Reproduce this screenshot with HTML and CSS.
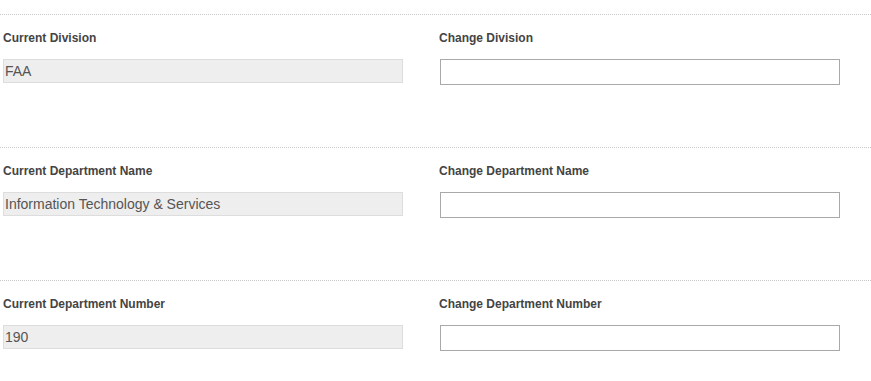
FILE: index.html
```html
<!DOCTYPE html>
<html lang="en">
<head>
    <meta charset="UTF-8">
    <meta name="viewport" content="width=device-width, initial-scale=1.0">
    <title>Change Department</title>
    <link rel="stylesheet" href="styles.css">
</head>
<body>
    <div class="form">
        <!-- Division -->
        <div class="section">
            <div class="field">
                <label>Current Division</label>
                <div class="readonly">FAA</div>
            </div>
            <div class="field">
                <label for="division">Change Division</label>
                <input type="text" id="division">
            </div>
        </div>
        <!-- Department name -->
        <div class="section">
            <div class="field">
                <label>Current Department Name</label>
                <div class="readonly">Information Technology &amp; Services</div>
            </div>
            <div class="field">
                <label for="deptName">Change Department Name</label>
                <input type="text" id="deptName">
            </div>
        </div>
        <!-- Department number -->
        <div class="section">
            <div class="field">
                <label>Current Department Number</label>
                <div class="readonly">190</div>
            </div>
            <div class="field">
                <label for="deptNumber">Change Department Number</label>
                <input type="text" id="deptNumber">
            </div>
        </div>
    </div>
</body>
</html>
```

FILE: styles.css
```css
/* General */
body {
    font-family: "Liberation Sans", Arial, sans-serif;
    margin: 0;
    padding: 14px 0 0 0;
    background: #fff;
    color: #444;
}

/* Sections */
.section {
    border-top: 1px dotted #c8c8c8;
    padding: 16px 0 62px 3px;
    display: flex;
    gap: 36px;
}

.section:last-child {
    padding-bottom: 20px;
}

.field {
    width: 400px;
}

.field label {
    display: block;
    font-size: 12px;
    font-weight: bold;
    line-height: 15px;
    margin-bottom: 13px;
    color: #444;
}

/* Read-only value */
.readonly {
    box-sizing: border-box;
    height: 24px;
    background: #eee;
    border: 1px solid #ddd;
    font-size: 14px;
    line-height: 22px;
    color: #555;
    padding: 0 1px;
}

/* Editable input */
.field input {
    box-sizing: border-box;
    display: block;
    width: 400px;
    height: 26px;
    margin-left: 1px;
    border: 1px solid #a9a9a9;
    border-radius: 0;
    padding: 0 4px;
    font-family: inherit;
    font-size: 14px;
    outline: none;
}
```
